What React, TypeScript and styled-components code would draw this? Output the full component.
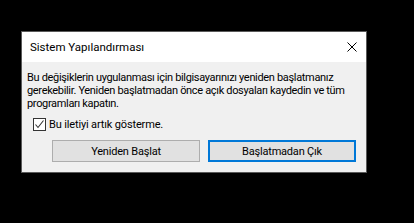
import styled, { createGlobalStyle } from "styled-components";

const GlobalStyle = createGlobalStyle`
  html, body {
    margin: 0;
    background: #000;
  }
  body {
    font-family: Roboto, "Liberation Sans", sans-serif;
    font-size: 11px;
    color: #000;
  }
`;

const App = () => {
  return (
    <>
      <GlobalStyle />
      <Screen>
        <Dialog>
          <TitleBar>
            <Title>Sistem Yapılandırması</Title>
            <CloseButton aria-label="Kapat">
              <svg width="10" height="10" viewBox="0 0 10 10">
                <path d="M0.5 0.5L9.5 9.5M9.5 0.5L0.5 9.5" stroke="#000" strokeWidth="1" fill="none" />
              </svg>
            </CloseButton>
          </TitleBar>
          <Body>
            <Message>
              <Line>Bu değişiklerin uygulanması için bilgisayarınızı yeniden başlatmanız</Line>
              <Line>gerekebilir. Yeniden başlatmadan önce açık dosyaları kaydedin ve tüm</Line>
              <Line>programları kapatın.</Line>
            </Message>
            <CheckRow>
              <CheckBox>
                <svg width="11" height="11" viewBox="0 0 11 11">
                  <path d="M1.5 5.5L4 8.5L9.5 1.5" stroke="#333" strokeWidth="1.1" fill="none" />
                </svg>
              </CheckBox>
              <CheckLabel>Bu iletiyi artık gösterme.</CheckLabel>
            </CheckRow>
            <Buttons>
              <Button>Yeniden Başlat</Button>
              <Button $focused>Başlatmadan Çık</Button>
            </Buttons>
          </Body>
        </Dialog>
      </Screen>
    </>
  );
};

export default App;

const Screen = styled.div`
  width: 414px;
  height: 223px;
  padding: 31px 0 0 21px;
  box-sizing: border-box;
`;

const Dialog = styled.div`
  width: 346px;
  border: 1px solid #5a5a5a;
  background: #f0f0f0;
  box-sizing: border-box;
`;

const TitleBar = styled.div`
  display: flex;
  align-items: center;
  justify-content: space-between;
  height: 30px;
  background: #fff;
  padding: 0 9px 0 8px;
`;

const Title = styled.span`
  font-size: 11.5px;
`;

const CloseButton = styled.div`
  display: flex;
  align-items: center;
  width: 10px;
  height: 10px;
`;

const Body = styled.div`
  display: flex;
  flex-direction: column;
  padding: 9px 0 10px 5px;
`;

const Message = styled.div`
  display: flex;
  flex-direction: column;
`;

const Line = styled.span`
  display: block;
  height: 13px;
  line-height: 13px;
  white-space: nowrap;
  letter-spacing: -0.33px;
`;

const CheckRow = styled.div`
  display: flex;
  align-items: center;
  gap: 3px;
  margin: 8px 0 0 6px;
`;

const CheckBox = styled.div`
  display: flex;
  align-items: center;
  justify-content: center;
  width: 13px;
  height: 13px;
  border: 1px solid #333;
  background: #fff;
  box-sizing: border-box;
`;

const CheckLabel = styled.span`
  line-height: 13px;
  letter-spacing: -0.15px;
`;

const Buttons = styled.div`
  display: flex;
  gap: 8px;
  margin: 9px 0 0 25px;
`;

const Button = styled.div<{ $focused?: boolean }>`
  display: flex;
  align-items: center;
  justify-content: center;
  width: 148px;
  height: 22px;
  box-sizing: border-box;
  background: #e1e1e1;
  border: ${(p) => (p.$focused ? "2px solid #0078d7" : "1px solid #adadad")};
  letter-spacing: -0.2px;
`;
